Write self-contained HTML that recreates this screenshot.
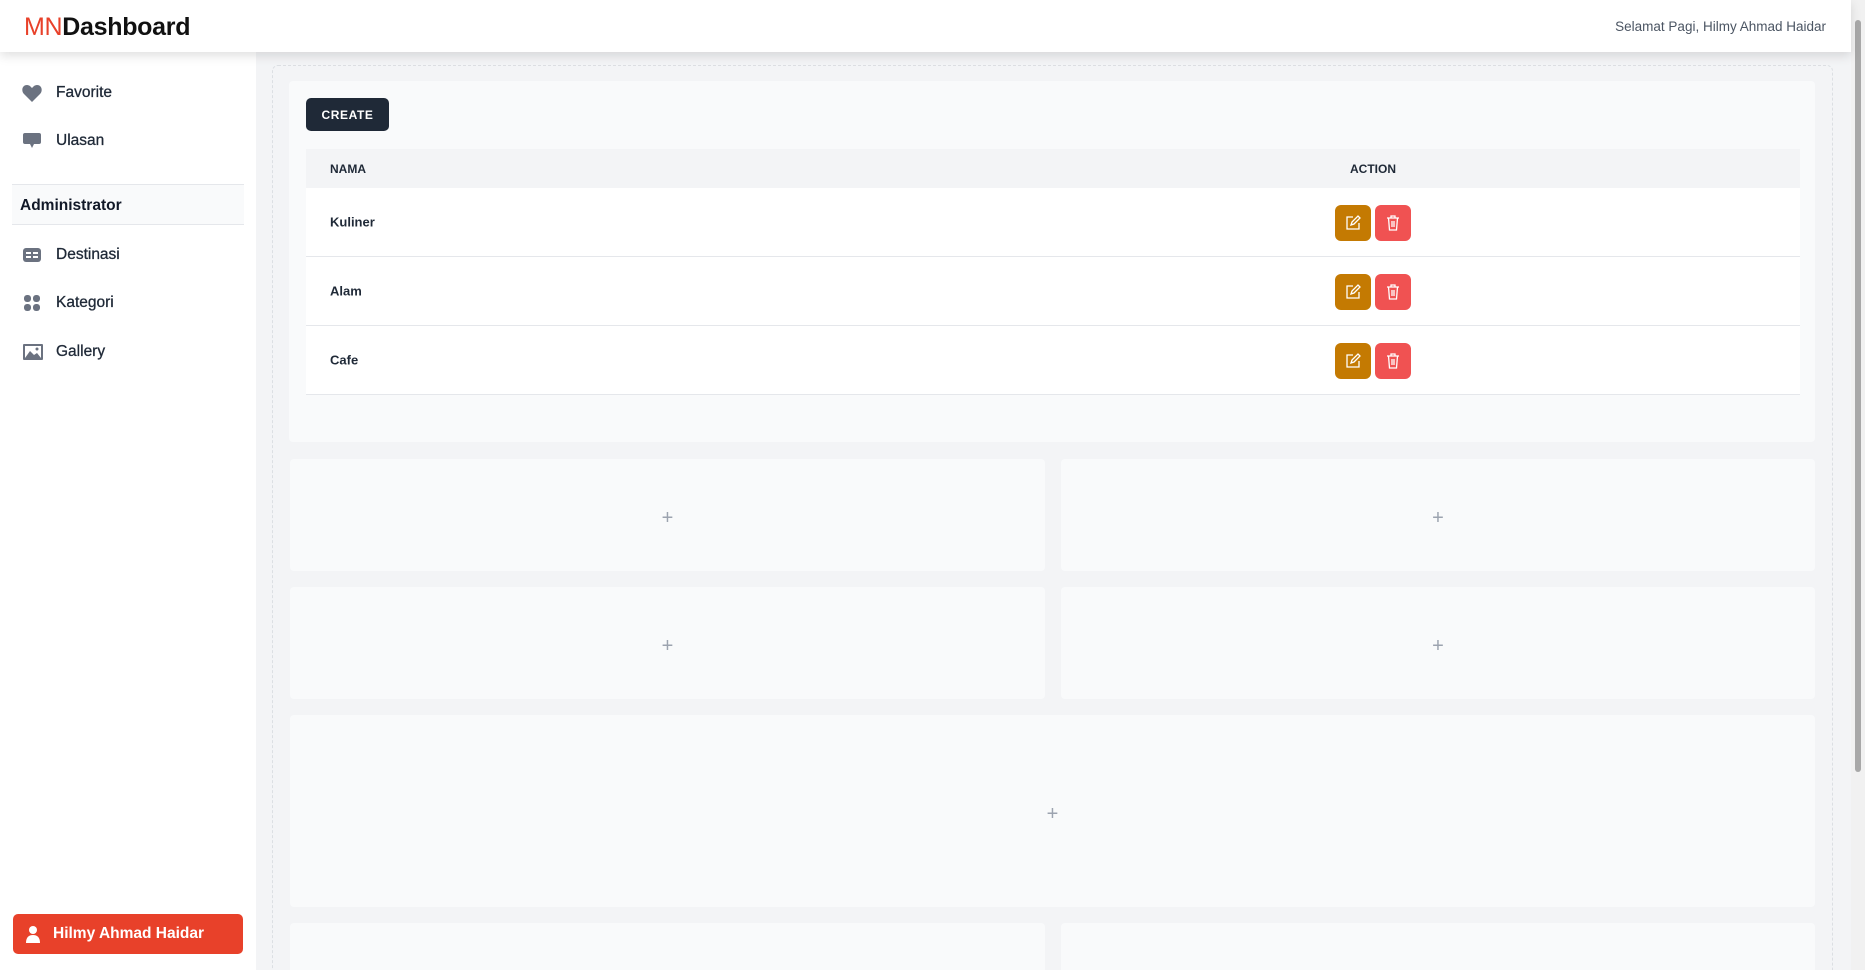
<!DOCTYPE html>
<html style="width:1865px;height:970px;overflow:hidden"><head><style>
*{box-sizing:border-box;margin:0;padding:0}
body{width:1865px;height:970px;overflow:hidden;font-family:"Liberation Sans",sans-serif;background:#f3f4f6;position:relative;color:#111827}
.hdr{position:absolute;left:0;top:0;width:1851px;height:52px;background:#fff;box-shadow:0 4px 10px rgba(0,0,0,.12);z-index:2}
.logo{position:absolute;left:24px;top:13px;font-size:25px;color:#111;font-weight:bold;letter-spacing:-0.3px}
.logo span{color:#e8412a;font-weight:normal}
.greet{position:absolute;right:25px;top:19px;font-size:13.5px;color:#4b5563}
.side{position:absolute;left:0;top:52px;width:256px;height:918px;background:#fff}
.it{position:absolute;left:0;height:30px;display:flex;align-items:center;font-size:15.5px;color:#1f2937}
.it svg{position:absolute;left:22px}
.it b{position:absolute;left:56px;font-weight:normal;white-space:nowrap;-webkit-text-stroke:0.3px #1f2937}
.adm{position:absolute;left:12px;top:132px;width:232px;height:41px;background:#f9fafb;border-top:1px solid #e5e7eb;border-bottom:1px solid #e5e7eb;font-weight:bold;font-size:15.5px;padding:12px 8px}
.user{position:absolute;left:13px;width:230px;height:40px;background:#e8412a;border-radius:5px;color:#fff;font-weight:bold;font-size:15.5px;display:flex;align-items:center;padding-left:40px}
.dash{position:absolute;left:272px;top:65px;width:1561px;height:920px;border:1.5px dashed #dcdfe3;border-radius:6px}
.card{position:absolute;left:289px;top:81px;width:1526px;height:361px;background:#f9fafb;border-radius:4px}
.btn{position:absolute;left:17px;top:17px;width:83px;height:33px;background:#1f2937;color:#fff;border-radius:5px;font-size:12px;font-weight:bold;letter-spacing:.6px;display:flex;align-items:center;justify-content:center}
.tbl{position:absolute;left:17px;top:68px;width:1494px}
.th{height:39px;background:#f3f4f6;font-size:12px;font-weight:bold;position:relative;color:#1f2937}
.tr{height:69px;background:#fff;border-bottom:1px solid #e5e7eb;position:relative;font-size:13px;font-weight:bold;color:#1f2937}
.c1{position:absolute;left:24px;top:50%;transform:translateY(-50%)}
.c2{position:absolute;left:1067px;top:50%;transform:translate(-50%,-50%)}
.ab{position:absolute;top:17px;width:36px;height:36px;border-radius:6px;display:flex;align-items:center;justify-content:center}
.ph{position:absolute;background:#f9fafb;border-radius:4px;display:flex;align-items:center;justify-content:center;color:#9ca3af;font-size:20px;font-weight:300;padding-top:7px}
.sb{position:absolute;right:0;top:0;width:14px;height:970px;background:#f1f1f1}
.sb i{position:absolute;left:4px;top:20px;width:6px;height:752px;background:#a8a8a8;border-radius:3px}
</style></head><body>
<div class="hdr"><div class="logo"><span>MN</span>Dashboard</div><div class="greet">Selamat Pagi, Hilmy Ahmad Haidar</div></div>
<div class="side">
<div class="it" style="top:26px"><svg width="20" height="18" viewBox="0 0 20 18"><path d="M10 18L2 10C-1 7 0 1 5 1C7.5 1 9 3 10 4C11 3 12.5 1 15 1C20 1 21 7 18 10Z" fill="#6b7280"/></svg><b>Favorite</b></div>
<div class="it" style="top:74px"><svg width="20" height="18" viewBox="0 0 20 18"><path d="M3 1H17A2 2 0 0 1 19 3V10A2 2 0 0 1 17 12H12L10 16L8 12H3A2 2 0 0 1 1 10V3A2 2 0 0 1 3 1Z" fill="#6b7280"/></svg><b>Ulasan</b></div>
<div class="adm">Administrator</div>
<div class="it" style="top:188px"><svg width="20" height="16" viewBox="0 0 20 16"><rect x="1" y="1" width="18" height="14" rx="3" fill="#6b7280"/><rect x="4" y="5" width="5" height="2" fill="#fff"/><rect x="11" y="5" width="5" height="2" fill="#fff"/><rect x="4" y="9" width="5" height="2" fill="#fff"/><rect x="11" y="9" width="5" height="2" fill="#fff"/></svg><b>Destinasi</b></div>
<div class="it" style="top:236px"><svg width="20" height="18" viewBox="0 0 20 18"><rect x="2" y="1" width="7" height="7" rx="3" fill="#6b7280"/><rect x="11" y="1" width="7" height="7" rx="3" fill="#6b7280"/><rect x="2" y="10" width="7" height="7" rx="3" fill="#6b7280"/><rect x="11" y="10" width="7" height="7" rx="3" fill="#6b7280"/></svg><b>Kategori</b></div>
<div class="it" style="top:285px"><svg width="22" height="18" viewBox="0 0 22 18"><rect x="1" y="1" width="20" height="16" rx="1" fill="#6b7280"/><rect x="3" y="3" width="16" height="12" fill="#fff"/><path d="M3 15L8 8L12 12L15 10L19 15Z" fill="#6b7280"/><circle cx="15" cy="6" r="1.5" fill="#6b7280"/></svg><b>Gallery</b></div>
<div class="user" style="top:862px"><svg style="position:absolute;left:12px" width="16" height="18" viewBox="0 0 16 18"><circle cx="8" cy="5" r="4" fill="#fff"/><path d="M1 18C1 12 4 10 8 10C12 10 15 12 15 18Z" fill="#fff"/></svg>Hilmy Ahmad Haidar</div>
</div>
<div class="dash"></div>
<div class="card"><div class="btn">CREATE</div>
<div class="tbl">
<div class="th"><span class="c1">NAMA</span><span class="c2">ACTION</span></div>
<div class="tr"><span class="c1">Kuliner</span><div class="ab" style="left:1029px;background:#c47a02"><svg width="18" height="18" viewBox="0 0 18 18" fill="none" stroke="#fff" stroke-width="1.3"><path d="M9 3H3V15H15V9"/><path d="M7 11L8 8L14 2L16 4L10 10Z"/></svg></div><div class="ab" style="left:1069px;background:#f05252"><svg width="18" height="18" viewBox="0 0 18 18" fill="none" stroke="#fff" stroke-width="1.3"><path d="M3 4H15M7 4V2H11V4M4.5 4L5.5 16H12.5L13.5 4M8 7V13M10 7V13"/></svg></div></div>
<div class="tr"><span class="c1">Alam</span><div class="ab" style="left:1029px;background:#c47a02"><svg width="18" height="18" viewBox="0 0 18 18" fill="none" stroke="#fff" stroke-width="1.3"><path d="M9 3H3V15H15V9"/><path d="M7 11L8 8L14 2L16 4L10 10Z"/></svg></div><div class="ab" style="left:1069px;background:#f05252"><svg width="18" height="18" viewBox="0 0 18 18" fill="none" stroke="#fff" stroke-width="1.3"><path d="M3 4H15M7 4V2H11V4M4.5 4L5.5 16H12.5L13.5 4M8 7V13M10 7V13"/></svg></div></div>
<div class="tr"><span class="c1">Cafe</span><div class="ab" style="left:1029px;background:#c47a02"><svg width="18" height="18" viewBox="0 0 18 18" fill="none" stroke="#fff" stroke-width="1.3"><path d="M9 3H3V15H15V9"/><path d="M7 11L8 8L14 2L16 4L10 10Z"/></svg></div><div class="ab" style="left:1069px;background:#f05252"><svg width="18" height="18" viewBox="0 0 18 18" fill="none" stroke="#fff" stroke-width="1.3"><path d="M3 4H15M7 4V2H11V4M4.5 4L5.5 16H12.5L13.5 4M8 7V13M10 7V13"/></svg></div></div>
</div></div>
<div class="ph" style="left:290px;top:459px;width:755px;height:112px">+</div>
<div class="ph" style="left:1061px;top:459px;width:754px;height:112px">+</div>
<div class="ph" style="left:290px;top:587px;width:755px;height:112px">+</div>
<div class="ph" style="left:1061px;top:587px;width:754px;height:112px">+</div>
<div class="ph" style="left:290px;top:715px;width:1525px;height:192px">+</div>
<div class="ph" style="left:290px;top:923px;width:755px;height:47px;border-radius:4px 4px 0 0"></div>
<div class="ph" style="left:1061px;top:923px;width:754px;height:47px;border-radius:4px 4px 0 0"></div>
<div class="sb"><i></i></div>
</body></html>
